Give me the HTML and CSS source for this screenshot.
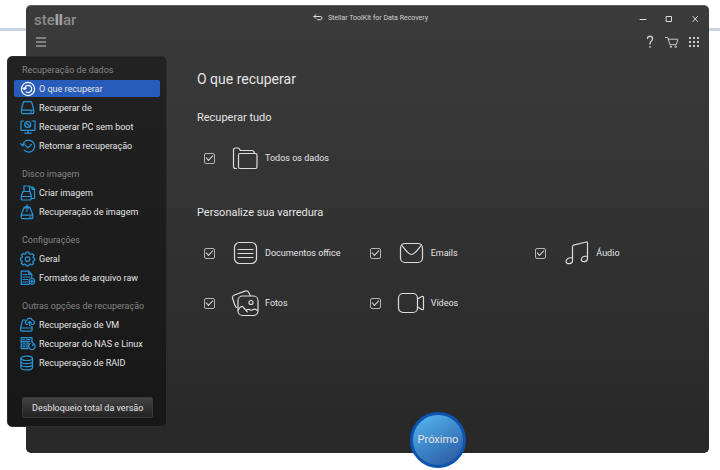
FILE: index.html
```html
<!DOCTYPE html>
<html lang="pt-BR">
  <head>
    <meta charset="UTF-8" />
    <title>Stellar ToolKit for Data Recovery</title>
    <link rel="stylesheet" href="styles.css">
  </head>
  <body>
    <div class="window">
      <header class="titlebar">
        <div class="logo">ste<b>ll</b>ar</div>
        <div class="window-title">
          <svg class="back-icon" width="10" height="8" viewBox="0 0 10 8"><path d="M3 0.5L1 2.5L3 4.5M1 2.5H7.5Q9 2.5 9 4T7.5 5.7H4.5" /></svg>
          <span>Stellar ToolKit for Data Recovery</span>
        </div>
        <div class="window-controls">
          <button aria-label="Minimizar"><svg width="8" height="8" viewBox="0 0 8 8"><path d="M1 4.5H7" /></svg></button>
          <button aria-label="Maximizar"><svg width="8" height="8" viewBox="0 0 8 8"><path d="M1.5 1.5H6.5V6.5H1.5Z" /></svg></button>
          <button aria-label="Fechar"><svg width="8" height="8" viewBox="0 0 8 8"><path d="M2 1.5L6.5 6.5M6.5 1.5L2 6.5" /></svg></button>
        </div>
      </header>

      <div class="toolbar">
        <button class="menu-button" aria-label="Menu"><svg width="10" height="10" viewBox="0 0 10 10"><path d="M0 1H10M0 5H10M0 9H10" /></svg></button>
        <div class="tools">
          <button aria-label="Ajuda"><svg width="10" height="14" viewBox="0 0 10 14"><path class="bold" d="M2.5 3.5Q2.7 1.3 5 1.3Q7.5 1.3 7.5 3.7Q7.5 5 6.2 6.2Q5 7.3 5 9M5 11.6V12.2" /></svg></button>
          <button aria-label="Comprar"><svg width="14" height="14" viewBox="0 0 14 14"><path d="M0.5 2.5H2.7L5 9.7H11.4L12.8 4.2H3.4" /><circle cx="5.7" cy="11.8" r="0.7" /><circle cx="10.6" cy="11.8" r="0.7" /></svg></button>
          <button aria-label="Aplicativos"><svg class="dots" width="10" height="10" viewBox="0 0 10 10"><path d="M0 1H10M0 5H10M0 9H10" /></svg></button>
        </div>
      </div>

      <nav class="sidebar">
        <section class="nav-group">
          <h3>Recuperação de dados</h3>
          <a class="nav-item active" href="#">
            <svg viewBox="0 0 16 16"><circle cx="8" cy="8" r="6.6" /><path d="M4.5 8A3.6 3.6 0 1 1 6.2 11M2.9 7L4.5 8.6L6.2 7" /></svg>
            O que recuperar
          </a>
          <a class="nav-item" href="#">
            <svg viewBox="0 0 16 16"><path d="M1.5 9.5L3.2 2.5Q3.4 1.7 4.2 1.7H10.8Q11.6 1.7 11.8 2.5L13.7 9.5V12.5Q13.7 13.7 12.5 13.7H2.7Q1.5 13.7 1.5 12.5ZM1.5 10.2H13.7M10.2 12H11.8" /></svg>
            Recuperar de
          </a>
          <a class="nav-item" href="#">
            <svg viewBox="0 0 16 16"><path d="M3.5 2H1V11.3H15V2H12M8 11.3V14M4.8 14.2H11.2" /><circle cx="7.7" cy="5.5" r="3" /><path d="M5.7 3.5L9.8 7.5" /></svg>
            Recuperar PC sem boot
          </a>
          <a class="nav-item" href="#">
            <svg viewBox="0 0 16 16"><path d="M2.7 7A6 6 0 1 1 4.2 12.2M0.6 5.7L2.7 7.8L5 5.9M5.7 7.7L8 9.8L11.5 6.3" /></svg>
            Retomar a recuperação
          </a>
        </section>

        <section class="nav-group">
          <h3>Disco imagem</h3>
          <a class="nav-item" href="#">
            <svg viewBox="0 0 16 16"><path d="M1.3 11L3 6.5H10L11.2 11V14Q11.2 15 10.2 15H2.3Q1.3 15 1.3 14ZM1.3 11.5H11.2M4 6.5V1H9.5V6.5M9.5 2H12.5L14.5 4V13.5H11.2M12 2V4.5H14.5" /></svg>
            Criar imagem
          </a>
          <a class="nav-item" href="#">
            <svg viewBox="0 0 16 16"><path d="M3.6 5L1.2 10.5V13.5Q1.2 14.7 2.4 14.7H11.6Q12.8 14.7 12.8 13.5V10.5L10.4 5M1.2 11.2H12.8M9.8 13H11M3.6 5Q3.6 3 5.8 2.8H8.2Q10.4 3 10.4 5M7 7.5V3M5.2 4.2L7 2L8.8 4.2M7 1V0.8" /></svg>
            Recuperação de imagem
          </a>
        </section>

        <section class="nav-group">
          <h3>Configurações</h3>
          <a class="nav-item" href="#">
            <svg viewBox="0 0 16 16"><path d="M6.1 1.2H8.9L9.3 3L10.5 3.5L12.1 2.5L14 4.4L13 6L13.5 7.1L14.6 7.5V9.5L13.2 10L12.8 11.1L13.7 12.6L11.8 14L10.4 13L9.3 13.4L8.8 14.9H6.2L5.7 13.4L4.6 13L3.2 14L1.3 12.2L2.3 10.8L1.8 9.7L0.6 9.3V7L1.9 6.6L2.4 5.4L1.4 4L3.2 2.4L4.7 3.3L5.7 3Z" /><circle cx="7.6" cy="8.1" r="2.3" /></svg>
            Geral
          </a>
          <a class="nav-item" href="#">
            <svg viewBox="0 0 16 16"><path d="M9 14.3H1.2V1.2H8.7L11.8 4.3V8M8.7 1.2V4.3H11.8M3 4.5H7M3 7H10M3 9.5H8M3 12H7.5" /><circle cx="11.8" cy="11.3" r="2.8" /><path d="M10.5 11.3H13.1M11.8 10V12.6" /></svg>
            Formatos de arquivo raw
          </a>
        </section>

        <section class="nav-group">
          <h3>Outras opções de recuperação</h3>
          <a class="nav-item" href="#">
            <svg viewBox="0 0 16 16"><path d="M5 3H2.7L0.7 10.5V13.2Q0.7 14.2 1.7 14.2H11Q12 14.2 12 13.2V10.5M0.7 11H12V9.5M7.5 7.5H6.7A2.2 2.2 0 0 1 6.8 3.3A2.8 2.8 0 0 1 12.2 3A2.3 2.3 0 0 1 12.8 7.5H11.5M9.6 9V4.5M7.8 6.2L9.6 4.4L11.4 6.2" /></svg>
            Recuperação de VM
          </a>
          <a class="nav-item" href="#">
            <svg viewBox="0 0 16 16"><path d="M8 12.6H1.2V1.7H12V5M1.2 5.3H10M1.2 9H8M3 3.5H4.5M6.5 3.5H10M3 7.2H4.5M6 7.2H8.5M3 10.8H4.5M6 10.8H8M10.3 7.6A3.2 3.2 0 1 0 13.5 7.6M11.7 5.8L13.6 7.5L12.6 9.6" /></svg>
            Recuperar do NAS e Linux
          </a>
          <a class="nav-item" href="#">
            <svg viewBox="0 0 16 16"><ellipse cx="6.7" cy="3.3" rx="5.8" ry="2.2" /><path d="M0.9 3.3V12.7C0.9 15.6 12.5 15.6 12.5 12.7V3.3M0.9 6.4C0.9 9.3 12.5 9.3 12.5 6.4M0.9 9.5C0.9 12.4 12.5 12.4 12.5 9.5" /></svg>
            Recuperação de RAID
          </a>
        </section>

        <button class="unlock-button">Desbloqueio total da versão</button>
      </nav>

      <main class="content">
        <h1>O que recuperar</h1>

        <h2>Recuperar tudo</h2>
        <div class="options">
          <label class="option">
            <input type="checkbox" checked />
            <svg viewBox="0 0 28 28"><path d="M5.5 24.5H4.5Q2.5 24.5 2.5 22.5V6Q2.5 4 4.5 4H6.8Q8 4 8.5 5L9.3 6.5H21Q23 6.5 23.4 9.2" /><rect x="7.5" y="9.5" width="18.5" height="15" rx="1.5" /></svg>
            <span>Todos os dados</span>
          </label>
        </div>

        <h2>Personalize sua varredura</h2>
        <div class="options">
          <label class="option">
            <input type="checkbox" checked />
            <svg viewBox="0 0 28 28"><rect x="3.5" y="3.5" width="22" height="21" rx="5" /><path d="M7 10.5H22M7 14.5H22M7 18.5H22" /></svg>
            <span>Documentos office</span>
          </label>
          <label class="option">
            <input type="checkbox" checked />
            <svg viewBox="0 0 28 28"><rect x="3.5" y="4.5" width="22" height="19" rx="4.5" /><path d="M4.5 6C8.5 11 11 15.5 14.5 15.5S20.5 11 24.5 6" /></svg>
            <span>Emails</span>
          </label>
          <label class="option">
            <input type="checkbox" checked />
            <svg viewBox="0 0 28 28"><path d="M10.5 22V7.5Q10.5 6.5 11.5 6.2L24.3 3Q25.5 2.7 25.5 4V19.5M10.5 18.5C7 18.5 4 20 4 22.5C4 25.5 10.5 25.5 10.5 21.5M25.5 17C22 17 19.3 18.5 19.3 20.7C19.3 23.5 25.5 23.5 25.5 19.5" /></svg>
            <span>Áudio</span>
          </label>
          <label class="option">
            <input type="checkbox" checked />
            <svg viewBox="0 0 28 28"><rect x="7" y="7" width="20" height="19.5" rx="4.5" /><path d="M5.8 18.5Q4.5 18 3.9 16.2L1.6 9.5Q0.9 7 3.4 6L14 2.1Q16.7 1.2 17.8 3.6L19.3 6.8M7.3 21C9 17.5 11 16.5 12.5 18.5L16.3 22.8M15 21.2C17 19.5 18.8 20.7 20.2 21.2C22 21.5 22.5 18.2 26.5 21.5" /><circle cx="20" cy="13.5" r="2" /></svg>
            <span>Fotos</span>
          </label>
          <label class="option">
            <input type="checkbox" checked />
            <svg viewBox="0 0 28 28"><rect x="1.5" y="4.5" width="19" height="19" rx="4.5" /><path d="M20.5 10L24.8 7.5Q26.5 7 26.5 8.5V19.5Q26.5 21 24.8 20.5L20.5 18" /></svg>
            <span>Vídeos</span>
          </label>
        </div>
      </main>

      <button class="next-button">Próximo</button>
    </div>
  </body>
</html>
```

FILE: styles.css
```css
* {
  box-sizing: border-box;
  margin: 0;
  padding: 0;
}

body {
  display: flex;
  min-height: 100vh;
  padding: 5px 11px 17px 26px;
  background: linear-gradient(#c9d3e3, #c9d3e3) 0 28px / 100% 3px no-repeat #ffffff;
  color: #e4e4e4;
  font-family: Roboto, "Liberation Sans", sans-serif;
  font-size: 9px;
  line-height: 12px;
}

button {
  border: none;
  background: none;
  color: inherit;
  font: inherit;
  cursor: pointer;
}

svg {
  display: block;
  flex: none;
  fill: none;
  stroke: #dcdcdc;
  stroke-linecap: round;
  stroke-linejoin: round;
}

.window {
  position: relative;
  flex: 1;
  display: flex;
  flex-direction: column;
  border-radius: 5px;
  border-top: 1px solid #5c5e5e;
  background: linear-gradient(#3b3b3b 0%, #363636 30%, #282828 100%);
}

/* title bar */
.titlebar {
  display: grid;
  grid-template-columns: 1fr auto 1fr;
  align-items: center;
  height: 26px;
  padding: 0 8px;
}

.logo {
  padding-top: 2px;
  color: #8c8c8c;
  font-size: 15px;
  font-weight: 500;
  line-height: 20px;
}

.logo b {
  color: #a4a4a4;
  font-weight: 900;
}

.window-title {
  display: flex;
  align-items: center;
  gap: 5px;
  padding: 0 0 3px 6px;
  color: #d0d0d0;
  font-size: 7px;
}

.window-controls {
  display: flex;
  justify-content: flex-end;
  gap: 18px;
  padding-right: 2px;
}

/* toolbar */
.toolbar {
  display: flex;
  justify-content: space-between;
  align-items: center;
  height: 20px;
  padding: 0 10px;
}

.toolbar svg {
  stroke: #c8c8c8;
}

.tools {
  display: flex;
  align-items: center;
  gap: 10px;
}

.bold {
  stroke-width: 1.4;
}

.dots {
  stroke-width: 2;
  stroke-linecap: butt;
  stroke-dasharray: 2 2;
}

/* sidebar */
.sidebar {
  position: absolute;
  top: 50px;
  left: -19px;
  width: 160px;
  padding: 5px 6px 8px;
  display: flex;
  flex-direction: column;
  gap: 12px;
  border: 1px solid #2c2c2c;
  border-radius: 5px;
  background: linear-gradient(#222222, #171717);
}

.nav-group {
  display: flex;
  flex-direction: column;
  gap: 2px;
}

.nav-group h3 {
  padding-left: 8px;
  color: #858585;
  font-size: 9px;
  font-weight: 400;
  line-height: 16px;
}

.nav-item {
  display: flex;
  align-items: center;
  gap: 3px;
  height: 17px;
  padding-left: 6px;
  border-radius: 2px;
  color: #e4e4e4;
  text-decoration: none;
}

.nav-item svg {
  width: 16px;
  height: 16px;
  stroke: #2596dc;
  stroke-width: 1.2;
}

.nav-item.active {
  background: #285cba;
}

.nav-item.active svg {
  stroke: #ffffff;
}

.unlock-button {
  align-self: flex-start;
  height: 21px;
  margin: 14px 0 0 8px;
  padding: 0 9px;
  border: 1px solid #3a3a3a;
  border-radius: 2px;
  background: linear-gradient(#434343, #222222);
}

/* content */
.content {
  padding: 18px 8px 48px 171px;
}

h1 {
  margin-bottom: 22px;
  font-size: 14px;
  font-weight: 400;
  line-height: 18px;
}

h2 {
  margin-bottom: 18px;
  font-size: 11px;
  font-weight: 400;
  line-height: 16px;
}

.options {
  display: grid;
  grid-template-columns: repeat(3, 1fr);
  row-gap: 22px;
  margin-bottom: 33px;
  padding-left: 7px;
}

.option {
  display: flex;
  align-items: center;
}

.option input {
  appearance: none;
  display: grid;
  place-items: center;
  width: 11px;
  height: 11px;
  margin-right: 16px;
  border: 1px solid #b4b4b4;
  border-radius: 2px;
}

.option input:checked::after {
  content: "";
  width: 6px;
  height: 3px;
  border: solid #dcdcdc;
  border-width: 0 0 1px 1px;
  transform: translateY(-1px) rotate(-45deg);
}

.option svg {
  width: 28px;
  height: 28px;
  margin-right: 6px;
  stroke-width: 1.2;
}

.next-button {
  position: absolute;
  bottom: -15px;
  left: 384px;
  width: 56px;
  height: 56px;
  border: 3px solid #0b55b0;
  border-radius: 50%;
  background: linear-gradient(150deg, #55b4ea 10%, #3a80c4 55%, #2a559c 95%);
  background-origin: border-box;
  font-size: 11px;
}
```
